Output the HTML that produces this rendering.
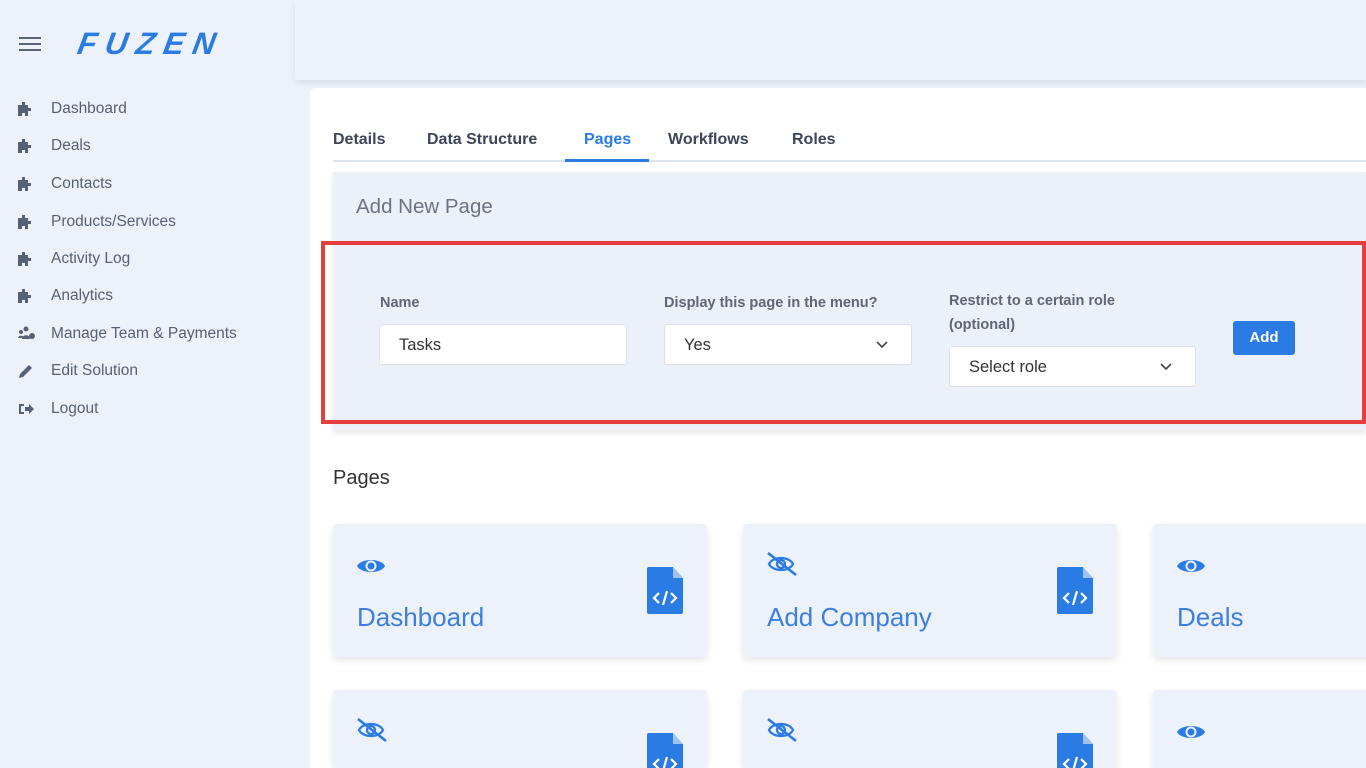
<!DOCTYPE html>
<html><head><meta charset="utf-8"><style>
*{box-sizing:border-box;margin:0;padding:0}
html,body{width:1366px;height:768px;overflow:hidden}
body{background:#edf1f9;font-family:"Liberation Sans","DejaVu Sans",sans-serif;position:relative;color:#4a5568}
.abs{position:absolute}
.top{left:295px;top:0;width:1071px;height:80px;background:#edf1f9;box-shadow:0 3px 6px rgba(0,0,0,.08)}
.logo{left:78px;top:26px;font-size:31px;font-weight:bold;font-style:italic;color:#2b7be4;letter-spacing:8.5px;transform:skewX(-10deg)}
.ham{left:19px;top:37px;width:22px}
.ham i{display:block;height:2px;background:#5a6478;margin-bottom:4px}
.nav{left:18px;font-size:15.5px;color:#566176;display:flex;align-items:center;height:20px}
.nav svg{width:18px;height:16px;margin-right:15px;fill:#566176;display:block}
.main{left:310px;top:88px;width:1056px;height:680px;background:#fff;border-radius:6px 0 0 0}
.tab{top:131px;font-size:16px;font-weight:bold;color:#3c4657}
.panel{left:333px;top:172px;width:1033px;height:258px;background:#ecf0f8;box-shadow:0 3px 6px rgba(0,0,0,.1)}
.red{left:321px;top:241px;width:1045px;height:183px;border:4px solid #e53e3e}
.lbl{font-size:14.5px;color:#5f6675;font-weight:bold;line-height:24px}
.inp{height:41px;background:#fff;border:1px solid #dbe1ea;border-radius:3px;font-size:16.5px;color:#333;padding:11px 19px}
.chev{position:absolute;right:22px;top:13px}
.card{width:374px;height:133px;background:#edf1f9;border-radius:4px;box-shadow:0 3px 8px rgba(0,0,0,.1)}
.card .t{position:absolute;left:24px;top:78px;font-size:26px;color:#3d7fe0}
.card .e{position:absolute;left:23px;top:32px}
.card .f{position:absolute;left:314px;top:43px}
</style></head><body>
<div class="abs top"></div>
<div class="abs ham"><i></i><i></i><i></i></div>
<div class="abs logo">FUZEN</div>

<div class="abs nav" style="top:99px"><svg viewBox="0 0 18 16"><path d="M0 4h4V1h3v3h3v3h3v3h-3v5H7v-3H4v3H0z"/></svg>Dashboard</div>
<div class="abs nav" style="top:136px"><svg viewBox="0 0 18 16"><path d="M0 4h4V1h3v3h3v3h3v3h-3v5H7v-3H4v3H0z"/></svg>Deals</div>
<div class="abs nav" style="top:174px"><svg viewBox="0 0 18 16"><path d="M0 4h4V1h3v3h3v3h3v3h-3v5H7v-3H4v3H0z"/></svg>Contacts</div>
<div class="abs nav" style="top:212px"><svg viewBox="0 0 18 16"><path d="M0 4h4V1h3v3h3v3h3v3h-3v5H7v-3H4v3H0z"/></svg>Products/Services</div>
<div class="abs nav" style="top:249px"><svg viewBox="0 0 18 16"><path d="M0 4h4V1h3v3h3v3h3v3h-3v5H7v-3H4v3H0z"/></svg>Activity Log</div>
<div class="abs nav" style="top:286px"><svg viewBox="0 0 18 16"><path d="M0 4h4V1h3v3h3v3h3v3h-3v5H7v-3H4v3H0z"/></svg>Analytics</div>
<div class="abs nav" style="top:324px"><svg viewBox="0 0 18 16"><circle cx="3" cy="6" r="2"/><circle cx="8" cy="3" r="2.5"/><path d="M0 12c0-3 6-3 6 0zM4 13c0-5 8-5 8 0z"/><circle cx="14" cy="10" r="3"/></svg>Manage Team &amp; Payments</div>
<div class="abs nav" style="top:361px"><svg viewBox="0 0 18 16"><path d="M1 15l1-4 9-9 3 3-9 9z"/></svg>Edit Solution</div>
<div class="abs nav" style="top:399px"><svg viewBox="0 0 18 16"><path d="M1 3h5v2H3v6h3v2H1zM7 6h4V3l5 5-5 5v-3H7z"/></svg>Logout</div>

<div class="abs main"></div>
<div class="abs tab" style="left:333px">Details</div>
<div class="abs tab" style="left:427px">Data Structure</div>
<div class="abs tab" style="left:584px;color:#2b7be4">Pages</div>
<div class="abs tab" style="left:668px">Workflows</div>
<div class="abs tab" style="left:792px">Roles</div>
<div class="abs" style="left:333px;top:160px;width:1033px;height:2px;background:#dde4f0"></div>
<div class="abs" style="left:565px;top:159px;width:84px;height:3px;background:#2b7be4"></div>

<div class="abs panel"></div>
<div class="abs" style="left:356px;top:195px;font-size:20.5px;color:#6b7384">Add New Page</div>
<div class="abs red"></div>

<div class="abs lbl" style="left:380px;top:291px">Name</div>
<div class="abs inp" style="left:379px;top:324px;width:248px">Tasks</div>
<div class="abs lbl" style="left:664px;top:291px">Display this page in the menu?</div>
<div class="abs inp" style="left:664px;top:324px;width:248px">Yes<svg class="chev" width="14" height="14" viewBox="0 0 14 14"><path d="M2 4l5 5 5-5" fill="none" stroke="#444" stroke-width="1.6"/></svg></div>
<div class="abs lbl" style="left:949px;top:289px">Restrict to a certain role<br>(optional)</div>
<div class="abs inp" style="left:949px;top:346px;width:247px">Select role<svg class="chev" width="14" height="14" viewBox="0 0 14 14"><path d="M2 4l5 5 5-5" fill="none" stroke="#444" stroke-width="1.6"/></svg></div>
<div class="abs" style="left:1233px;top:321px;width:62px;height:34px;background:#2b7be4;border-radius:3px;color:#fff;font-weight:bold;font-size:15px;text-align:center;line-height:34px">Add</div>

<div class="abs" style="left:333px;top:467px;font-size:20px;color:#333">Pages</div>

<svg width="0" height="0" style="position:absolute"><defs>
<g id="eye"><path d="M1 10C5 2 25 2 29 10C25 18 5 18 1 10z" fill="#2b7be4"/><circle cx="15" cy="10" r="5.5" fill="#edf1f9"/><circle cx="15" cy="10" r="3.5" fill="#2b7be4"/></g>
<g id="eyex" fill="none" stroke="#2b7be4" stroke-width="2.3"><path d="M3 12C7 4 23 4 27 12C23 20 7 20 3 12z"/><circle cx="15" cy="12" r="4"/><path d="M2 1l28 22" stroke-width="2.6"/></g>
<g id="file"><path d="M0 2a2 2 0 012-2h24l10 11v34a2 2 0 01-2 2H2a2 2 0 01-2-2z" fill="#2b7be4"/><path d="M26 0v11h10z" fill="#edf1f9" opacity=".6"/><path d="M12 26l-5 5 5 5M24 26l5 5-5 5M20 24l-4 14" fill="none" stroke="#fff" stroke-width="2.2"/></g>
</defs></svg>

<div class="abs card" style="left:333px;top:524px"><svg class="e" width="31" height="20"><use href="#eye"/></svg><svg class="f" width="36" height="48"><use href="#file"/></svg><div class="t">Dashboard</div></div>
<div class="abs card" style="left:743px;top:524px"><svg class="e" width="32" height="25" style="top:28px"><use href="#eyex"/></svg><svg class="f" width="36" height="48"><use href="#file"/></svg><div class="t">Add Company</div></div>
<div class="abs card" style="left:1153px;top:524px"><svg class="e" width="31" height="20"><use href="#eye"/></svg><div class="t">Deals</div></div>
<div class="abs card" style="left:333px;top:690px;height:78px;border-radius:4px 4px 0 0"><svg class="e" width="32" height="25" style="top:28px"><use href="#eyex"/></svg><svg class="f" width="36" height="48"><use href="#file"/></svg></div>
<div class="abs card" style="left:743px;top:690px;height:78px;border-radius:4px 4px 0 0"><svg class="e" width="32" height="25" style="top:28px"><use href="#eyex"/></svg><svg class="f" width="36" height="48"><use href="#file"/></svg></div>
<div class="abs card" style="left:1153px;top:690px;height:78px;border-radius:4px 4px 0 0"><svg class="e" width="31" height="20"><use href="#eye"/></svg></div>
</body></html>
